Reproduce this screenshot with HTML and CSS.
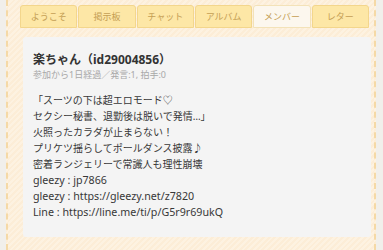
FILE: index.html
```html
<!DOCTYPE html>
<html lang="ja">
<head>
    <meta charset="UTF-8">
    <meta name="viewport" content="width=device-width, initial-scale=1.0">
    <title>メンバー</title>
    <link rel="stylesheet" href="styles.css">
</head>
<body>

    <div class="page">
        <ul class="tabs">
            <li class="tab">ようこそ</li>
            <li class="tab">掲示板</li>
            <li class="tab">チャット</li>
            <li class="tab">アルバム</li>
            <li class="tab active">メンバー</li>
            <li class="tab">レター</li>
        </ul>

        <div class="panel">
            <h2 class="name">楽ちゃん（id29004856）</h2>
            <p class="meta">参加から1日経過／発言:1, 拍手:0</p>
            <p class="profile">「スーツの下は超エロモード♡<br>
セクシー秘書、退勤後は脱いで発情…」<br>
火照ったカラダが止まらない！<br>
プリケツ揺らしてポールダンス披露♪<br>
密着ランジェリーで常識人も理性崩壊<br>
<span class="links">gleezy : jp7866<br>
gleezy : https://gleezy.net/z7820<br>
Line : https://line.me/ti/p/G5r9r69ukQ</span></p>
        </div>
    </div>

</body>
</html>
```

FILE: styles.css
```css
body {
    margin: 0;
    background-color: #f1efeb;
    font-family: "Noto Sans", "Noto Sans CJK JP", sans-serif;
    color: #3a3a3a;
}
.page {
    margin-left: 6px;
    width: 370px;
    height: 250px;
    box-sizing: border-box;
    padding: 5px 0 0 12px;
    border-left: 2px dashed #f5d9a6;
    border-right: 2px dashed #f5d9a6;
    background-color: #fdf0dc;
    background-image: repeating-linear-gradient(-45deg, #fdf2e1 0, #fdf2e1 2px, #fcedd7 2px, #fcedd7 4px);
}
.tabs {
    display: flex;
    gap: 1px;
    width: 349px;
    margin: 0;
    padding: 0;
    list-style: none;
}
.tab {
    flex: 1;
    height: 23px;
    box-sizing: border-box;
    border: 1px solid #f3d68c;
    border-radius: 3px 3px 0 0;
    background: #fde7a6;
    color: #c59f55;
    font-size: 9px;
    line-height: 21px;
    text-align: center;
}
.tab.active {
    background: #fcf7ee;
    border-color: #f3e2b8;
}
.panel {
    margin: 9px 3px 0 3px;
    padding: 15px 10px 17px;
    background: #f4f4f4;
    border-radius: 3px;
}
.name {
    margin: 0;
    font-size: 12px;
    line-height: 16px;
    font-weight: bold;
    color: #333;
}
.meta {
    margin: 0;
    font-size: 9px;
    line-height: 14px;
    color: #a8a8a8;
}
.profile {
    margin: 10px 0 0;
    font-size: 10px;
    line-height: 16px;
    color: #383838;
}
.links {
    font-size: 10.7px;
}
```
